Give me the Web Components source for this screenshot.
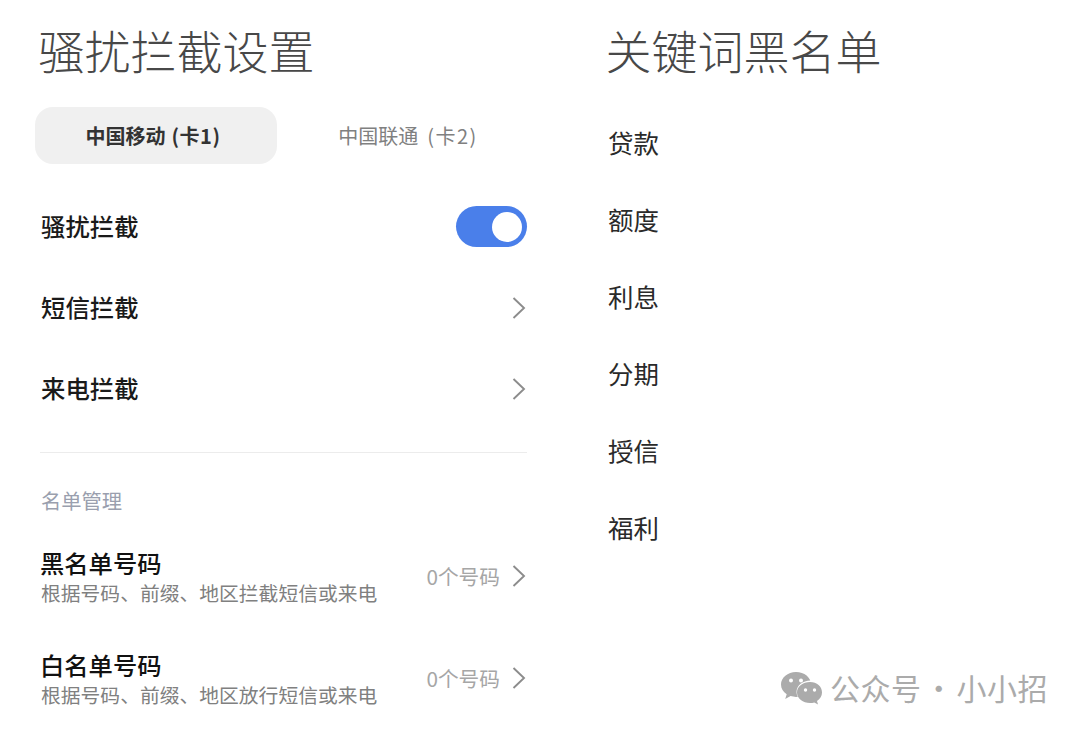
<!DOCTYPE html>
<html lang="zh-CN">
<head>
<meta charset="utf-8">
<title>骚扰拦截设置</title>
<style>
html,body{margin:0;padding:0;background:#fff;}
body{font-family:"Noto Sans CJK SC","Noto Sans",sans-serif;}
keyword-column page-title{margin-left:-2.5px;}
</style>
</head>
<body>
<app-page>
    <settings-column slot="left">
        <page-title>骚扰拦截设置</page-title>
        <sim-tabs first="中国移动 (卡1)" second="中国联通 (卡2)"></sim-tabs>
        <setting-row label="骚扰拦截" toggle></setting-row>
        <setting-row label="短信拦截"></setting-row>
        <setting-row label="来电拦截"></setting-row>
        <section-head>名单管理</section-head>
        <list-row label="黑名单号码" sub="根据号码、前缀、地区拦截短信或来电" count="0个号码"></list-row>
        <list-row label="白名单号码" sub="根据号码、前缀、地区放行短信或来电" count="0个号码"></list-row>
    </settings-column>
    <keyword-column slot="right">
        <page-title>关键词黑名单</page-title>
        <keyword-item>贷款</keyword-item>
        <keyword-item>额度</keyword-item>
        <keyword-item>利息</keyword-item>
        <keyword-item>分期</keyword-item>
        <keyword-item>授信</keyword-item>
        <keyword-item>福利</keyword-item>
    </keyword-column>
    <wechat-mark>公众号 · 小小招</wechat-mark>
</app-page>

<script>
const FONT='"Noto Sans CJK SC","Noto Sans",sans-serif';
const CHEVRON=`<svg width="14" height="24" viewBox="0 0 14 24" fill="none" stroke="#8c8c8c" stroke-width="1.9"><path d="M1.5 2 L12 12 L1.5 22"/></svg>`;

class AppPage extends HTMLElement{
    constructor(){
        super();
        this.attachShadow({mode:'open'});
        this.shadowRoot.innerHTML=`
            <style>
            :host{display:flex;position:relative;width:1080px;height:732px;overflow:hidden;background:#fff;font-family:${FONT};}
            .left{display:block;width:487px;margin-left:40px;}
            .right{display:block;margin-left:81px;flex:1;}
            </style>
            <div class="left"><slot name="left"></slot></div>
            <div class="right"><slot name="right"></slot></div>
            <slot></slot>`;
    }
}
class SettingsColumn extends HTMLElement{
    constructor(){
        super();
        this.attachShadow({mode:'open'});
        this.shadowRoot.innerHTML=`<style>:host{display:flex;flex-direction:column;}</style><slot></slot>`;
    }
}
class KeywordColumn extends HTMLElement{
    constructor(){
        super();
        this.attachShadow({mode:'open'});
        this.shadowRoot.innerHTML=`<style>:host{display:flex;flex-direction:column;}</style><slot></slot>`;
    }
}
class PageTitle extends HTMLElement{
    constructor(){
        super();
        this.attachShadow({mode:'open'});
        this.shadowRoot.innerHTML=`<style>
            :host{display:flex;align-items:center;box-sizing:border-box;height:102px;padding-bottom:4px;margin-left:-1.5px;font-size:46px;font-weight:300;color:#484848;white-space:nowrap;}
            </style><slot></slot>`;
    }
}
class SimTabs extends HTMLElement{
    constructor(){
        super();
        this.attachShadow({mode:'open'});
        const tab=t=>{
            const [name,card]=t.split(' ');
            return `<span>${name}</span> <span class="card">${card}</span>`;
        };
        this.shadowRoot.innerHTML=`<style>
            :host{display:grid;grid-template-columns:242px 242px;column-gap:10px;margin:5px 0 22px -5px;width:494px;}
            div{box-sizing:border-box;height:57px;display:flex;align-items:center;justify-content:center;font-size:20px;white-space:nowrap;border-radius:18px;}
            .on{background:#f0f0f0;color:#333;font-weight:700;padding-right:6px;gap:6px;}
            .off{color:#808080;gap:9px;}
            .on .card{letter-spacing:.5px;}
            .off .card{letter-spacing:1.5px;}
            </style>
            <div class="on">${tab(this.getAttribute('first'))}</div>
            <div class="off">${tab(this.getAttribute('second'))}</div>`;
    }
}
class SettingRow extends HTMLElement{
    constructor(){
        super();
        this.attachShadow({mode:'open'});
        const end=this.hasAttribute('toggle')?'<span class="toggle"><i></i></span>':CHEVRON;
        this.shadowRoot.innerHTML=`<style>
            :host{display:flex;align-items:center;justify-content:space-between;height:81px;}
            .label{font-size:24.4px;font-weight:500;color:#1a1a1a;margin-left:1px;padding-bottom:2px;}
            .toggle{display:flex;align-items:center;justify-content:flex-end;box-sizing:border-box;width:71px;height:41px;padding-right:5px;border-radius:21px;background:#4a7fea;}
            .toggle i{width:30px;height:30px;border-radius:50%;background:#fff;}
            svg{display:block;margin-right:1px;}
            </style>
            <span class="label">${this.getAttribute('label')}</span>${end}`;
    }
}
class SectionHead extends HTMLElement{
    constructor(){
        super();
        this.attachShadow({mode:'open'});
        this.shadowRoot.innerHTML=`<style>
            :host{display:flex;align-items:center;height:30px;margin:23px 0 12px;padding:32px 0 0 1px;border-top:1px solid #ececec;font-size:20.3px;color:#9a9fae;}
            </style><slot></slot>`;
    }
}
class ListRow extends HTMLElement{
    constructor(){
        super();
        this.attachShadow({mode:'open'});
        this.shadowRoot.innerHTML=`<style>
            :host{display:flex;align-items:center;justify-content:space-between;height:102px;}
            .text{display:flex;flex-direction:column;}
            .label{font-size:24.3px;line-height:30px;font-weight:500;color:#111;}
            .sub{font-size:19.8px;line-height:30px;color:#808080;white-space:nowrap;margin-left:1px;}
            .end{display:flex;align-items:center;gap:12px;margin-bottom:4px;font-size:20.7px;color:#a6a6a6;}
            svg{display:block;margin-right:1px;}
            </style>
            <div class="text"><span class="label">${this.getAttribute('label')}</span><span class="sub">${this.getAttribute('sub')}</span></div>
            <div class="end"><span>${this.getAttribute('count')}</span>${CHEVRON}</div>`;
    }
}
class KeywordItem extends HTMLElement{
    constructor(){
        super();
        this.attachShadow({mode:'open'});
        this.shadowRoot.innerHTML=`<style>
            :host{display:flex;align-items:center;height:77px;font-size:25.5px;color:#2a2a2a;}
            :host(:nth-of-type(1)){margin-top:1px;}
            </style><slot></slot>`;
    }
}
class WechatMark extends HTMLElement{
    constructor(){
        super();
        this.attachShadow({mode:'open'});
        this.shadowRoot.innerHTML=`<style>
            :host{position:absolute;left:781px;top:667px;display:flex;align-items:center;gap:7px;height:40px;font-size:30px;letter-spacing:.5px;word-spacing:-5px;color:#ababab;white-space:nowrap;}
            svg{display:block;margin-top:2px;}
            </style>
            <svg width="42" height="34" viewBox="0 0 42 34">
                <path fill="#ababab" d="M15 1C6.700 1 0 6.600 0 13.500c0 4 2.200 7.500 5.700 9.800L4.200 28l5.400-2.900c1.700.5 3.500.8 5.400.8 8.300 0 15-5.600 15-12.500S23.300 1 15 1z"/>
                <path fill="#fff" d="M29.500 9.500c-7.800 0-14 5-14 11.500s6.200 11.500 14 11.500c1.500 0 3-.2 4.400-.6L38 34l-.9-3.800c3-2 4.900-5.300 4.900-9.200 0-6.500-5.700-11.500-12.500-11.500z"/>
                <path fill="#ababab" d="M29 11c-7 0-13 4.500-13 10.500S22 32 29 32c1.500 0 3-.2 4.300-.6l3.700 2-1-3.400c3.200-1.900 5-5 5-8.500C41 15.500 36 11 29 11z"/>
                <circle cx="10" cy="9.500" r="2" fill="#fff"/><circle cx="20" cy="9.500" r="2" fill="#fff"/>
                <circle cx="24.500" cy="19" r="1.700" fill="#fff"/><circle cx="33.500" cy="19" r="1.700" fill="#fff"/>
            </svg>
            <slot></slot>`;
    }
}
customElements.define('app-page',AppPage);
customElements.define('settings-column',SettingsColumn);
customElements.define('keyword-column',KeywordColumn);
customElements.define('page-title',PageTitle);
customElements.define('sim-tabs',SimTabs);
customElements.define('setting-row',SettingRow);
customElements.define('section-head',SectionHead);
customElements.define('list-row',ListRow);
customElements.define('keyword-item',KeywordItem);
customElements.define('wechat-mark',WechatMark);
</script>
</body>
</html>
